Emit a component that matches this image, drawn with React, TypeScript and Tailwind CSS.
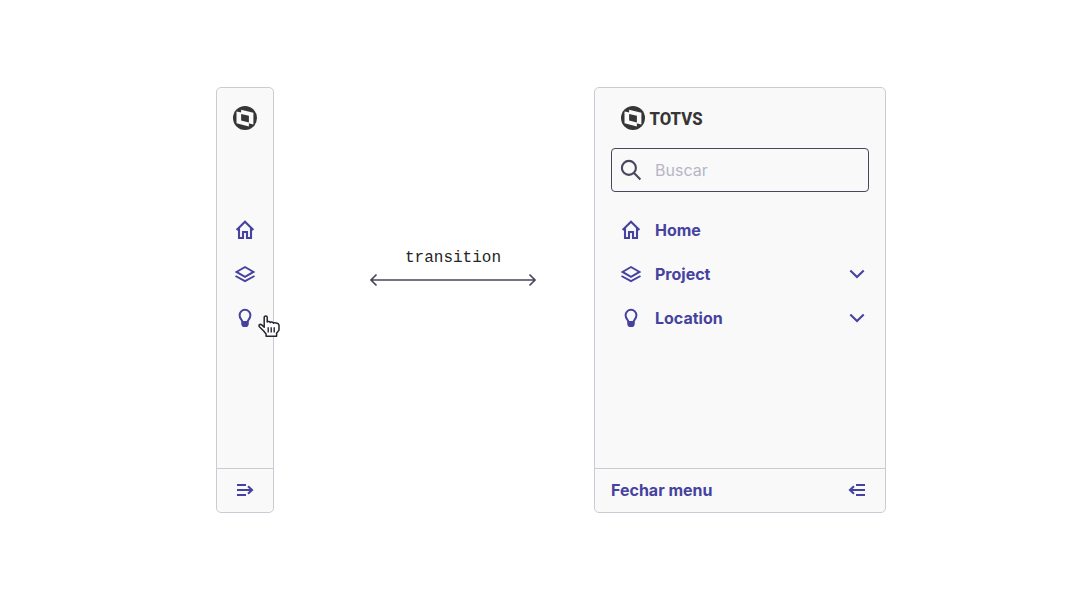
import type { ReactNode } from 'react';

function Icon({ children }: { children: ReactNode }) {
  return (
    <svg className="size-6 shrink-0 text-[#4542a0]" viewBox="0 0 24 24" fill="none" stroke="currentColor" strokeWidth="2.1">
      {children}
    </svg>
  );
}

function Logo() {
  return (
    <svg className="size-6 shrink-0" viewBox="0 0 24 24">
      <circle cx="12" cy="12" r="12" fill="#363636" />
      <path d="M3.5 5.6 15.9 8V20.4L3.5 17.2Z" fill="#fafafa" />
      <path d="M8.1 3.7 20.4 6.7V18.6L8.1 15.6Z" fill="#fafafa" />
      <path d="M8.1 8 15.9 9.7V16.4L8.1 14.6Z" fill="#363636" />
    </svg>
  );
}

const Home = () => (
  <Icon>
    <path d="M3.6 12 12 3.8 20.4 12M6 10v10h4v-6h4v6h4V10" />
  </Icon>
);

const Layers = () => (
  <Icon>
    <path d="M12 5 20.5 9.9 12 14.8 3.5 9.9ZM2.5 14 12 19.2l9.5-5.2" strokeWidth="1.9" />
  </Icon>
);

const Bulb = () => (
  <Icon>
    <path d="M9.5 16C9.2 13.8 6.6 12.8 6.6 9.2a5.4 5.4 0 0 1 10.8 0c0 3.6-2.6 4.6-2.9 6.8Z" strokeWidth="2" />
    <path d="M8.3 15.5h7.4v3.2L14.2 20.9H9.8l-1.5-2.2Z" fill="currentColor" stroke="none" />
  </Icon>
);

const Chevron = () => (
  <Icon>
    <path d="m5.3 8.6 6.7 6.5 6.7-6.5" />
  </Icon>
);

const OpenMenu = () => (
  <Icon>
    <path d="M4 7h9M4 12h14.5M4 17h9M15 8.3l4 3.7-4 3.7" />
  </Icon>
);

const CloseMenu = () => (
  <Icon>
    <path d="M20 7h-9M20 12H5.5M20 17h-9M9 8.3 5 12l4 3.7" />
  </Icon>
);

const items = [
  { label: 'Home', icon: Home, expandable: false },
  { label: 'Project', icon: Layers, expandable: true },
  { label: 'Location', icon: Bulb, expandable: true },
];

function Pointer() {
  return (
    <svg className="absolute top-[226px] left-[40px] h-[24px] w-[24px]" viewBox="0 0 24 24" fill="#fff" stroke="#252533" strokeWidth="1.5" strokeLinejoin="round">
      <path d="M7.2 13.2V3.3c0-1.9 3-1.9 3 0v4.8c.3-1 3-.9 3.1.5.5-.9 3-.8 3.1.7.7-.8 4.9-.5 5.6 1.6v5.2l-2.4 3.2v3H9.1v-2.4L6.7 17l-4.3-4.3c-1.3-1.8.8-3 2.3-1.8Z" />
      <path d="M11.2 13.2v5.2M14.2 13.2v5.2M17.2 13.2v5.2" strokeWidth="1.4" />
    </svg>
  );
}

export default function App() {
  return (
    <main className="flex h-[600px] w-[1088px] bg-white pt-[87px] pl-[216px] font-['Inter',sans-serif] text-base text-[#4542a0]">
      <aside className="relative flex h-[426px] w-[58px] shrink-0 flex-col items-center rounded-[5px] border border-[#cccbd5] bg-[#f9f9f9] pt-[18px]">
        <Logo />
        <nav className="mt-[78px] flex flex-col">
          {items.map(({ label, icon: Glyph }) => (
            <div key={label} className="flex h-11 items-center">
              <Glyph />
            </div>
          ))}
        </nav>
        <footer className="mt-auto flex h-11 w-full items-center justify-center border-t border-[#cccbd5] pb-px">
          <OpenMenu />
        </footer>
        <Pointer />
      </aside>

      <div className="flex w-[320px] shrink-0 flex-col items-center pt-[159px] pl-[38px]">
        <span className="font-['Liberation_Mono',monospace] text-[16px] leading-6 text-[#252526]">transition</span>
        <svg className="mt-[3px] h-[14px] w-[168px] shrink-0" viewBox="0 0 168 14" fill="none" stroke="#4a475c" strokeWidth="1.7">
          <path d="M2 7h164M7.5 1.5 2 7l5.5 5.5M160.5 1.5 166 7l-5.5 5.5" />
        </svg>
      </div>

      <aside className="flex h-[426px] w-[292px] shrink-0 flex-col rounded-[5px] border border-[#cccbd5] bg-[#f9f9f9] pt-[18px]">
        <div className="flex h-6 items-center gap-[4px] pl-[26px]">
          <Logo />
          <svg className="h-8 w-[60px] overflow-visible" viewBox="0 0 60 32">
            <text x="0.5" y="22.8" textLength="53" lengthAdjust="spacingAndGlyphs" className="font-['Roboto',sans-serif] text-[18px] font-extrabold" fill="#363636">TOTVS</text>
          </svg>
        </div>
        <label className="mx-4 mt-[18px] flex h-11 items-center gap-3 rounded-[4px] border border-[#4a475c] pl-[7px]">
          <svg className="size-6 shrink-0" viewBox="0 0 24 24" fill="none" stroke="#4a475c" strokeWidth="2.1">
            <circle cx="9.9" cy="9.9" r="7" />
            <path d="m14.8 14.8 6.6 6.6" />
          </svg>
          <span className="text-[#b7b5c6]">Buscar</span>
        </label>
        <nav className="mt-4 flex flex-col">
          {items.map(({ label, icon: Glyph, expandable }) => (
            <div key={label} className="flex h-11 items-center pr-4 pl-6">
              <Glyph />
              <span className="ml-3 grow font-bold">{label}</span>
              {expandable && <Chevron />}
            </div>
          ))}
        </nav>
        <footer className="mt-auto flex h-11 items-center justify-between border-t border-[#cccbd5] px-4 pb-px font-bold">
          Fechar menu
          <CloseMenu />
        </footer>
      </aside>
    </main>
  );
}
